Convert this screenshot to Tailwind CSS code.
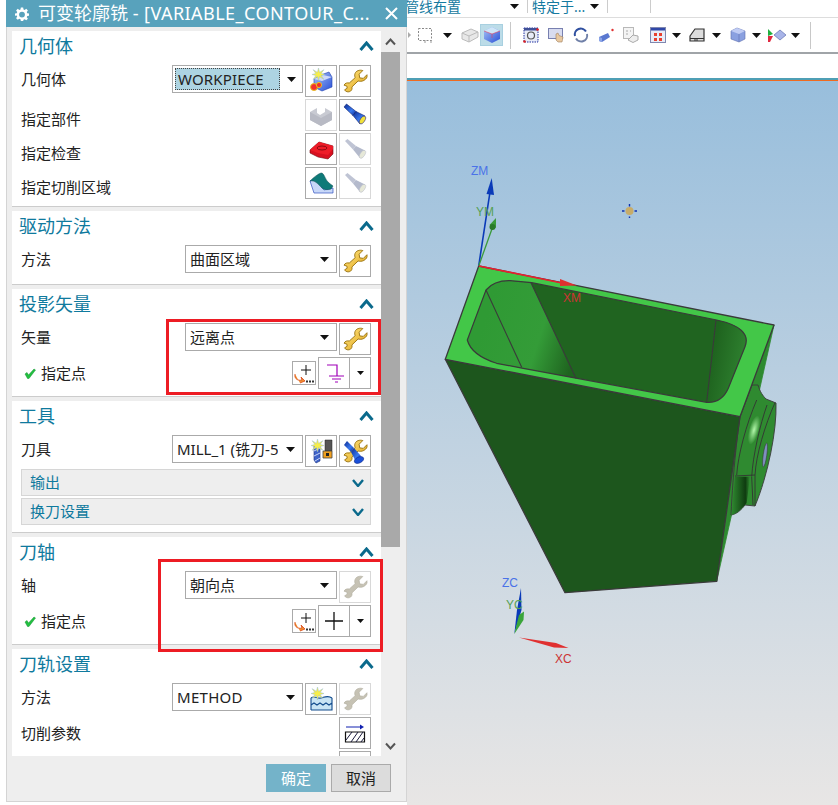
<!DOCTYPE html>
<html lang="zh-CN">
<head>
  <meta charset="UTF-8" />
  <title>可变轮廓铣</title>
  <script src="https://cdn.jsdelivr.net/npm/@tailwindcss/browser@4"></script>
</head>
<body class="w-[838px] h-[805px] overflow-hidden bg-white text-[15px] text-[#222] font-[family-name:'Noto_Sans','Noto_Sans_CJK_SC',sans-serif]">

  <!-- shared icons -->
  <svg class="absolute w-0 h-0" xmlns="http://www.w3.org/2000/svg">
    <defs>
      <linearGradient id="gold" x1="0" y1="0" x2="1" y2="1"><stop offset="0" stop-color="#ffe98a"/><stop offset="1" stop-color="#e0a010"/></linearGradient>
      <linearGradient id="blueBox" x1="0" y1="0" x2="1" y2="1"><stop offset="0" stop-color="#a9c4f5"/><stop offset="1" stop-color="#2a50d8"/></linearGradient>
      <linearGradient id="torch" x1="0" y1="0" x2="1" y2="1"><stop offset="0" stop-color="#0b2a90"/><stop offset="0.6" stop-color="#3a7af0"/><stop offset="1" stop-color="#0a2a90"/></linearGradient>
    </defs>
    <symbol id="wrench" viewBox="0 0 24 24">
      <path d="M23 5.5 19.5 9 16 8.5 15.5 5 19 1.5C16 .6 12.5 1.500 11.5 4.500 11 6 11.3 7.3 11.7 8.3L6 13.5C4 13 2 13.5 1 15.5L3.800 16.500 4 18.500 1.500 20C3 22.500 6.500 22.500 8 20.500 8.800 19.400 8.800 18.300 8.500 17.300L14.500 11.500C16 12 18 12 20 11 22.500 9.500 23.500 8 23 5.500Z" fill="url(#gold)" stroke="#9a7410" stroke-width=".9"/>
    </symbol>
    <symbol id="wrench-off" viewBox="0 0 24 24">
      <path d="M23 5.5 19.5 9 16 8.5 15.5 5 19 1.5C16 .6 12.5 1.500 11.5 4.500 11 6 11.3 7.3 11.7 8.3L6 13.5C4 13 2 13.5 1 15.5L3.800 16.500 4 18.500 1.500 20C3 22.500 6.500 22.500 8 20.500 8.800 19.400 8.800 18.300 8.500 17.300L14.500 11.500C16 12 18 12 20 11 22.500 9.500 23.500 8 23 5.500Z" fill="#c6c2b4" stroke="#b0ad9f" stroke-width=".6"/>
    </symbol>
    <symbol id="torch-on" viewBox="0 0 24 24">
      <path d="M1 4 3.500 1 13 8.500 10 12.500Z" fill="url(#torch)" stroke="#0a1f70" stroke-width=".6"/>
      <path d="M10 12.500 13 8.500 22 13 17 21Z" fill="url(#torch)" stroke="#0a1f70" stroke-width=".6"/>
      <ellipse cx="19.500" cy="17" rx="2.300" ry="4.500" transform="rotate(32 19.500 17)" fill="#f2e23a" stroke="#30308a" stroke-width=".6"/>
    </symbol>
    <symbol id="torch-off" viewBox="0 0 24 24">
      <path d="M2 4 4.500 2 13 9 10 12.500Z" fill="#bfc4d4"/>
      <path d="M10 12.500 13 9 22 13.500 17 21Z" fill="#b4bacc"/>
      <ellipse cx="19.500" cy="17.300" rx="2.300" ry="4.500" transform="rotate(32 19.500 17.300)" fill="#e6e8d8" stroke="#b8bccb" stroke-width=".5"/>
    </symbol>
    <symbol id="arrow" viewBox="0 0 9 5"><path d="M0 0H9L4.500 5Z" fill="#111"/></symbol>
    <symbol id="star" viewBox="0 0 12 12"><path d="M6 0 7 4 11 1.500 8.500 5 12 6 8.500 7 11 10.500 7 8 6 12 5 8 1 10.500 3.500 7 0 6 3.500 5 1 1.500 5 4Z" fill="#f7ee4a" stroke="#8fb8d8" stroke-width=".4"/></symbol>
  </svg>

  <div class="flex h-full pl-[6px]">

    <!-- operation dialog -->
    <div class="relative z-10 flex flex-col w-[401px] h-[802px] shrink-0 bg-[#eeeeee] border-x border-b border-[#d4d4d4]">
      <div class="flex items-center h-[27px] -mx-px bg-[#58a2bc] text-white text-[18px] shrink-0">
        <svg class="ml-[9px] w-[14px] h-[14px]" viewBox="0 0 24 24"><path fill="#fff" fill-rule="evenodd" d="M10 1h4l.6 3.200 2 .8L19.300 3.100l2.800 2.800L20.200 8.600l.8 2L24 11v4l-3 .4-.8 2 1.900 2.700-2.800 2.800-2.700-1.900-2 .8L14 24h-4l-.6-3.200-2-.8-2.700 1.900-2.800-2.800 1.900-2.700-.8-2L0 15v-4l3-.4.8-2L1.900 5.900 4.700 3.100 7.400 5l2-.8ZM12 8a5 5 0 1 0 0 10 5 5 0 0 0 0-10Z"/></svg>
        <span class="ml-[9px] whitespace-nowrap">可变轮廓铣 <span class="tracking-[.45px]">- [VARIABLE_CONTOUR_C...</span></span>
        <svg class="ml-auto mr-[9px] w-[13px] h-[13px]" viewBox="0 0 13 13"><path d="M1 1 12 12M12 1 1 12" stroke="#fff" stroke-width="2"/></svg>
      </div>

      <div class="flex mt-[4px] ml-[5px] h-[725px] shrink-0">
        <div class="w-[369px] h-full overflow-hidden">

          <section class="bg-white border-b border-[#cccccc] mb-[4px] h-[176px]">
            <div class="flex items-center justify-between h-[34px] pb-[4px] px-[7px] text-[18px] text-[#0f7a9e]">
              <span>几何体</span>
              <svg class="w-[15px] h-[10px]" viewBox="0 0 15 10"><path d="M1.500 9 7.500 2 13.500 9" fill="none" stroke="#0b6a8c" stroke-width="3"/></svg>
            </div>
            <div class="flex h-[34px] pl-[9px] pr-[10px]">
              <span class="flex-1 leading-[28px]">几何体</span>
              <div class="flex items-center w-[131px] h-[28px] border border-[#aaaaaa] pl-[2px]">
                <span class="w-[105px] h-[22px] leading-[20px] pl-[2px] tracking-[.15px] bg-[#add4e2] border border-dotted border-[#444]">WORKPIECE</span>
                <svg class="ml-[7px] w-[9px] h-[5px]"><use href="#arrow"/></svg>
              </div>
              <div class="flex items-center justify-center w-[32px] h-[32px] ml-[2px] border border-[#aaaaaa]">
                <svg class="w-[26px] h-[26px]" viewBox="0 0 26 26">
                  <path d="M10 8 21 4 24 9V19L14 23 6 19V11Z" fill="url(#blueBox)" stroke="#1f3fb0" stroke-width=".6"/>
                  <path d="M6 11 15 7 24 9 14 13Z" fill="#cdd9f8"/>
                  <circle cx="6" cy="19" r="3.500" fill="#f23030" stroke="#e8c020"/>
                  <circle cx="11" cy="17" r="2.600" fill="#f23030" stroke="#e8c020"/>
                  <use href="#star" x="4" y="0" width="13" height="13"/>
                </svg>
              </div>
              <div class="flex items-center justify-center w-[32px] h-[32px] ml-[2px] border border-[#aaaaaa]"><svg class="w-[25px] h-[25px]"><use href="#wrench"/></svg></div>
            </div>
            <div class="flex h-[34px] pl-[9px] pr-[10px]">
              <span class="flex-1 leading-[40px]">指定部件</span>
              <div class="flex items-center justify-center w-[32px] h-[32px] ml-[2px] border border-[#d8d8d8]">
                <svg class="w-[24px] h-[24px]" viewBox="0 0 24 24"><path d="M1 9 8 5V10L11 12 16 9 16 5 23 9V17L12 23 1 17Z" fill="#c8cad2"/><path d="M1 9 12 15 23 9V17L12 23 1 17Z" fill="#b8bac4"/></svg>
              </div>
              <div class="flex items-center justify-center w-[32px] h-[32px] ml-[2px] border border-[#aaaaaa]"><svg class="w-[24px] h-[24px]"><use href="#torch-on"/></svg></div>
            </div>
            <div class="flex h-[34px] pl-[9px] pr-[10px]">
              <span class="flex-1 leading-[40px]">指定检查</span>
              <div class="flex items-center justify-center w-[32px] h-[32px] ml-[2px] border border-[#aaaaaa]">
                <svg class="w-[25px] h-[25px]" viewBox="0 0 25 25"><path d="M1 13 10 5 24 9V17L19 22 9 20 1 16Z" fill="#d81020" stroke="#700a10" stroke-width=".6"/><path d="M1 13 9 16 19 18 24 12V9L10 5Z" fill="#ee1c28"/><ellipse cx="13" cy="11" rx="5" ry="2" fill="none" stroke="#8a0a12"/></svg>
              </div>
              <div class="flex items-center justify-center w-[32px] h-[32px] ml-[2px] border border-[#d8d8d8]"><svg class="w-[24px] h-[24px]"><use href="#torch-off"/></svg></div>
            </div>
            <div class="flex h-[34px] pl-[9px] pr-[10px]">
              <span class="flex-1 leading-[40px]">指定切削区域</span>
              <div class="flex items-center justify-center w-[32px] h-[32px] ml-[2px] border border-[#aaaaaa]">
                <svg class="w-[25px] h-[25px]" viewBox="0 0 25 25"><path d="M1 10 5 22 24 22 24 17 15 19 6 8Z" fill="#c8d8f8" stroke="#3050c0" stroke-width=".7"/><path d="M1 10C5 6 9 3 12 2 15 1.500 16 8 19 11 21 13 23 14 24 15L22 18C19 19 15 19 13 17 9 13 6 9 1 10Z" fill="#0f7a78" stroke="#0a4a50" stroke-width=".5"/></svg>
              </div>
              <div class="flex items-center justify-center w-[32px] h-[32px] ml-[2px] border border-[#d8d8d8]"><svg class="w-[24px] h-[24px]"><use href="#torch-off"/></svg></div>
            </div>
          </section>

          <section class="bg-white border-b border-[#cccccc] mb-[4px] h-[74px]">
            <div class="flex items-center justify-between h-[34px] pb-[4px] px-[7px] text-[18px] text-[#0f7a9e]">
              <span>驱动方法</span>
              <svg class="w-[15px] h-[10px]" viewBox="0 0 15 10"><path d="M1.500 9 7.500 2 13.500 9" fill="none" stroke="#0b6a8c" stroke-width="3"/></svg>
            </div>
            <div class="flex h-[34px] pl-[9px] pr-[10px]">
              <span class="flex-1 leading-[28px]">方法</span>
              <div class="flex items-center justify-between w-[152px] h-[28px] border border-[#aaaaaa] pl-[4px] pr-[7px]">
                <span>曲面区域</span>
                <svg class="w-[9px] h-[5px]"><use href="#arrow"/></svg>
              </div>
              <div class="flex items-center justify-center w-[32px] h-[32px] ml-[2px] border border-[#aaaaaa]"><svg class="w-[25px] h-[25px]"><use href="#wrench"/></svg></div>
            </div>
          </section>

          <section class="bg-white border-b border-[#cccccc] mb-[4px] h-[108px]">
            <div class="flex items-center justify-between h-[34px] pb-[4px] px-[7px] text-[18px] text-[#0f7a9e]">
              <span>投影矢量</span>
              <svg class="w-[15px] h-[10px]" viewBox="0 0 15 10"><path d="M1.500 9 7.500 2 13.500 9" fill="none" stroke="#0b6a8c" stroke-width="3"/></svg>
            </div>
            <div class="flex h-[34px] pl-[9px] pr-[10px]">
              <span class="flex-1 leading-[28px]">矢量</span>
              <div class="flex items-center justify-between w-[152px] h-[28px] border border-[#aaaaaa] pl-[4px] pr-[7px]">
                <span>远离点</span>
                <svg class="w-[9px] h-[5px]"><use href="#arrow"/></svg>
              </div>
              <div class="flex items-center justify-center w-[32px] h-[32px] ml-[2px] border border-[#aaaaaa]"><svg class="w-[25px] h-[25px]"><use href="#wrench"/></svg></div>
            </div>
            <div class="flex items-center h-[32px] pl-[12px] pr-[10px]">
              <svg class="w-[12px] h-[11px]" viewBox="0 0 12 11"><path d="M1 6 3 4.500 4.500 7 10 1 11.500 2 5 10.500H3.500Z" fill="#22c040" stroke="#129030" stroke-width=".5"/></svg>
              <span class="flex-1 ml-[5px]">指定点</span>
              <div class="flex items-center justify-center w-[24px] h-[24px] border border-[#aaaaaa]">
                <svg class="w-[22px] h-[22px]" viewBox="0 0 22 22"><path d="M13 3V13M8 8H18" stroke="#111"/><path d="M2 12C1 17 5 19 9 18L8 15 12 19 7 21" fill="#f09030" stroke="#d84818" stroke-width=".8"/><path d="M13 18.500h2v2h-2ZM16 18.500h2v2h-2ZM19 18.500h2v2h-2Z" fill="#333"/></svg>
              </div>
              <div class="flex w-[53px] h-[32px] ml-[2px] border border-[#aaaaaa]">
                <div class="flex items-center justify-center w-[31px] border-r border-[#aaaaaa]">
                  <svg class="w-[22px] h-[22px]" viewBox="0 0 22 22"><path d="M4 3H14V14M6 14H21M9 17H18M12 20H15" fill="none" stroke="#a000b8" stroke-width="1.200"/></svg>
                </div>
                <div class="flex flex-1 items-center justify-center"><svg class="w-[7px] h-[4px]"><use href="#arrow"/></svg></div>
              </div>
            </div>
          </section>

          <section class="bg-white border-b border-[#cccccc] mb-[4px] h-[132px]">
            <div class="flex items-center justify-between h-[34px] pb-[4px] px-[7px] text-[18px] text-[#0f7a9e]">
              <span>工具</span>
              <svg class="w-[15px] h-[10px]" viewBox="0 0 15 10"><path d="M1.500 9 7.500 2 13.500 9" fill="none" stroke="#0b6a8c" stroke-width="3"/></svg>
            </div>
            <div class="flex h-[34px] pl-[9px] pr-[10px]">
              <span class="flex-1 leading-[28px]">刀具</span>
              <div class="flex items-center w-[131px] h-[28px] border border-[#aaaaaa] pl-[4px]">
                <span class="w-[101px] overflow-hidden whitespace-nowrap">MILL_1 (铣刀-5</span>
                <svg class="ml-[8px] w-[9px] h-[5px]"><use href="#arrow"/></svg>
              </div>
              <div class="flex items-center justify-center w-[32px] h-[32px] ml-[2px] border border-[#aaaaaa]">
                <svg class="w-[26px] h-[26px]" viewBox="0 0 26 26"><path d="M6 8H12V23L8 25 6 22Z" fill="#3f63c8" stroke="#1a2f80" stroke-width=".6"/><path d="M6 13 12 10M6 18 12 15M7 23 12 20" stroke="#c8d4f8"/><path d="M17 2H24V13H17Z" fill="#555" stroke="#222" stroke-width=".5"/><path d="M15 13H24V20H15Z" fill="#f0a020" stroke="#444" stroke-width=".8"/><rect x="18" y="15" width="3" height="3" fill="#222"/><use href="#star" x="3" y="1" width="13" height="13"/></svg>
              </div>
              <div class="flex items-center justify-center w-[32px] h-[32px] ml-[2px] border border-[#aaaaaa]">
                <svg class="w-[25px] h-[25px]" viewBox="0 0 25 25"><use href="#wrench" width="25" height="25"/><path d="M1 6 4 2 11 9 8 13Z" fill="url(#torch)"/><path d="M8 13 11 9 18 17 13 23Z" fill="url(#torch)"/><ellipse cx="16" cy="21" rx="5" ry="3" transform="rotate(-25 16 21)" fill="#1a50d8" stroke="#0a2080" stroke-width=".5"/></svg>
              </div>
            </div>
            <div class="flex items-center justify-between h-[27px] ml-[9px] mr-[10px] bg-[#eeeeee] border border-[#d6d6d6] pl-[8px] pr-[6px] text-[#0f7a9e]">
              <span>输出</span>
              <svg class="w-[12px] h-[8px]" viewBox="0 0 12 8"><path d="M1 1 6 7 11 1" fill="none" stroke="#0b6a8c" stroke-width="2.400"/></svg>
            </div>
            <div class="flex items-center justify-between h-[27px] mt-[2px] ml-[9px] mr-[10px] bg-[#eeeeee] border border-[#d6d6d6] pl-[8px] pr-[6px] text-[#0f7a9e]">
              <span>换刀设置</span>
              <svg class="w-[12px] h-[8px]" viewBox="0 0 12 8"><path d="M1 1 6 7 11 1" fill="none" stroke="#0b6a8c" stroke-width="2.400"/></svg>
            </div>
          </section>

          <section class="bg-white border-b border-[#cccccc] mb-[4px] h-[108px]">
            <div class="flex items-center justify-between h-[34px] pb-[4px] px-[7px] text-[18px] text-[#0f7a9e]">
              <span>刀轴</span>
              <svg class="w-[15px] h-[10px]" viewBox="0 0 15 10"><path d="M1.500 9 7.500 2 13.500 9" fill="none" stroke="#0b6a8c" stroke-width="3"/></svg>
            </div>
            <div class="flex h-[34px] pl-[9px] pr-[10px]">
              <span class="flex-1 leading-[28px]">轴</span>
              <div class="flex items-center justify-between w-[152px] h-[28px] border border-[#aaaaaa] pl-[4px] pr-[7px]">
                <span>朝向点</span>
                <svg class="w-[9px] h-[5px]"><use href="#arrow"/></svg>
              </div>
              <div class="flex items-center justify-center w-[32px] h-[32px] ml-[2px] border border-[#d8d8d8]"><svg class="w-[25px] h-[25px]"><use href="#wrench-off"/></svg></div>
            </div>
            <div class="flex items-center h-[32px] pl-[12px] pr-[10px]">
              <svg class="w-[12px] h-[11px]" viewBox="0 0 12 11"><path d="M1 6 3 4.500 4.500 7 10 1 11.500 2 5 10.500H3.500Z" fill="#22c040" stroke="#129030" stroke-width=".5"/></svg>
              <span class="flex-1 ml-[5px]">指定点</span>
              <div class="flex items-center justify-center w-[24px] h-[24px] border border-[#aaaaaa]">
                <svg class="w-[22px] h-[22px]" viewBox="0 0 22 22"><path d="M13 3V13M8 8H18" stroke="#111"/><path d="M2 12C1 17 5 19 9 18L8 15 12 19 7 21" fill="#f09030" stroke="#d84818" stroke-width=".8"/><path d="M13 18.500h2v2h-2ZM16 18.500h2v2h-2ZM19 18.500h2v2h-2Z" fill="#333"/></svg>
              </div>
              <div class="flex w-[53px] h-[32px] ml-[2px] border border-[#aaaaaa]">
                <div class="flex items-center justify-center w-[31px] border-r border-[#aaaaaa]">
                  <svg class="w-[20px] h-[20px]" viewBox="0 0 20 20"><path d="M10 1V19M1 10H19" stroke="#111" stroke-width="1.300"/></svg>
                </div>
                <div class="flex flex-1 items-center justify-center"><svg class="w-[7px] h-[4px]"><use href="#arrow"/></svg></div>
              </div>
            </div>
          </section>

          <section class="bg-white border-b border-[#cccccc] h-[140px]">
            <div class="flex items-center justify-between h-[34px] pb-[4px] px-[7px] text-[18px] text-[#0f7a9e]">
              <span>刀轨设置</span>
              <svg class="w-[15px] h-[10px]" viewBox="0 0 15 10"><path d="M1.500 9 7.500 2 13.500 9" fill="none" stroke="#0b6a8c" stroke-width="3"/></svg>
            </div>
            <div class="flex h-[34px] pl-[9px] pr-[10px]">
              <span class="flex-1 leading-[28px]">方法</span>
              <div class="flex items-center w-[131px] h-[28px] border border-[#aaaaaa] pl-[4px]">
                <span class="w-[101px] overflow-hidden whitespace-nowrap tracking-[.3px]">METHOD</span>
                <svg class="ml-[8px] w-[9px] h-[5px]"><use href="#arrow"/></svg>
              </div>
              <div class="flex items-center justify-center w-[32px] h-[32px] ml-[2px] border border-[#aaaaaa]">
                <svg class="w-[26px] h-[26px]" viewBox="0 0 26 26"><path d="M3 12C7 9 9 13 13 12 17 11 20 9 24 12V24H3Z" fill="#c8e4f4"/><path d="M3 12C7 9 9 13 13 12 17 11 20 9 24 12M3 19 6 17 9 19 12 17 15 19 18 17 21 19 24 17M3 24H24V12M3 12V24" fill="none" stroke="#104a8c" stroke-width="1.100"/><use href="#star" x="3" y="1" width="13" height="13"/></svg>
              </div>
              <div class="flex items-center justify-center w-[32px] h-[32px] ml-[2px] border border-[#d8d8d8]"><svg class="w-[25px] h-[25px]"><use href="#wrench-off"/></svg></div>
            </div>
            <div class="flex h-[34px] pl-[9px] pr-[10px]">
              <span class="flex-1 leading-[32px]">切削参数</span>
              <div class="flex items-center justify-center w-[32px] h-[32px] ml-[2px] border border-[#aaaaaa]">
                <svg class="w-[24px] h-[24px]" viewBox="0 0 24 24"><path d="M3 6H19" stroke="#1020b0"/><path d="M17 3.500 21 6 17 8.500Z" fill="#1020b0"/><path d="M2.500 11H21.500V21H2.500Z" fill="#fff" stroke="#111" stroke-width="1.200"/><path d="M3 19 9 11M8 21 15 11M13 21 20 11M18 21 21 17" stroke="#1a1a3c"/></svg>
              </div>
            </div>
            <div class="flex h-[34px] pr-[10px] justify-end">
              <div class="w-[32px] h-[32px] border border-[#aaaaaa]"></div>
            </div>
          </section>
        </div>

        <!-- scrollbar -->
        <div class="flex flex-col w-[19px] h-full">
          <div class="flex items-center justify-center h-[21px]"><svg class="w-[11px] h-[8px]" viewBox="0 0 11 8"><path d="M1 6.500 5.500 1.500 10 6.500" fill="none" stroke="#555" stroke-width="2"/></svg></div>
          <div class="h-[495px] bg-[#a9a9a9]"></div>
          <div class="flex flex-1 items-end justify-center">
            <div class="flex items-center justify-center h-[21px]"><svg class="w-[11px] h-[8px]" viewBox="0 0 11 8"><path d="M1 1.500 5.500 6.500 10 1.500" fill="none" stroke="#555" stroke-width="2"/></svg></div>
          </div>
        </div>
      </div>

      <div class="flex justify-end gap-[5px] pt-[8px] pr-[15px]">
        <button class="w-[60px] h-[28px] bg-[#74b3c9] text-white">确定</button>
        <button class="w-[60px] h-[28px] bg-[#dcdcdc] border border-[#aaaaaa]">取消</button>
      </div>

      <!-- red call-outs drawn on the screenshot -->
      <div class="absolute left-[159px] top-[319px] w-[215px] h-[76px] border-[3px] border-[#ed1c24]"></div>
      <div class="absolute left-[151px] top-[559px] w-[225px] h-[93px] border-[3px] border-[#ed1c24]"></div>
    </div>

    <!-- main window -->
    <div class="flex flex-col flex-1 min-w-0">
      <div class="flex items-start h-[18px] shrink-0 border-b border-[#dddddd] text-[14px] leading-[13px] text-[#157a9f] overflow-hidden">
        <span class="w-[105px] -ml-[2px] whitespace-nowrap">管线布置</span>
        <svg class="mt-[4px] w-[9px] h-[5px]"><use href="#arrow"/></svg>
        <span class="ml-[8px] h-[13px] border-l border-[#cccccc]"></span>
        <span class="ml-[4px] w-[52px] whitespace-nowrap">特定于...</span>
        <svg class="mt-[4px] ml-[6px] w-[9px] h-[5px]"><use href="#arrow"/></svg>
        <span class="ml-[8px] h-[13px] border-l border-[#cccccc]"></span>
        <span class="ml-[42px] h-[13px] border-l border-[#cccccc]"></span>
      </div>

      <div class="flex items-center h-[36px] shrink-0 border-b-2 border-[#a0a4a8]">
        <svg class="ml-[1px] w-[3px] h-[6px]" viewBox="0 0 3 6"><path d="M0 0 3 3 0 6Z" fill="#aaa"/></svg>
        <svg class="ml-[6px] w-[16px] h-[16px]" viewBox="0 0 16 16"><rect x="1.500" y="1.500" width="13" height="12" fill="none" stroke="#888" stroke-dasharray="2 1.500"/><path d="M8 13V16M14 13V16" stroke="#999"/></svg>
        <svg class="ml-[10px] w-[9px] h-[5px]"><use href="#arrow"/></svg>
        <svg class="ml-[9px] w-[18px] h-[16px]" viewBox="0 0 18 16"><path d="M1 6 10 2 17 5V10L8 15 1 12Z" fill="#e8e8e8" stroke="#bbb"/><path d="M1 6 8 9 17 5M8 9V15" fill="none" stroke="#bbb"/></svg>
        <div class="flex items-center justify-center ml-[1px] w-[23px] h-[22px] bg-[#bcdce8] border border-[#a8d0e0]">
          <svg class="w-[18px] h-[18px]" viewBox="0 0 18 18"><path d="M1 5 9 1 17 5V13L9 17 1 13Z" fill="url(#blueBox)"/><path d="M1 5 9 8 17 5 9 1Z" fill="#cfe6f8"/><path d="M1 5 9 8 17 5M9 8V12" fill="none" stroke="#e04060" stroke-width=".6"/></svg>
        </div>
        <span class="ml-[7px] h-[27px] border-l border-[#c8c8c8]"></span>
        <svg class="ml-[12px] w-[16px] h-[16px]" viewBox="0 0 16 16"><rect x="1" y="1" width="14" height="14" fill="#e8ecf8" stroke="#2030a0" stroke-dasharray="1.500 1"/><rect x="1" y="1" width="14" height="2.500" fill="#405098"/><circle cx="8" cy="8.500" r="3.500" fill="none" stroke="#555" stroke-width="1.200"/><circle cx="14.500" cy="2.500" r="1.300" fill="#e02020"/><circle cx="1.500" cy="14.500" r="1.300" fill="#e02020"/></svg>
        <svg class="ml-[9px] w-[16px] h-[16px]" viewBox="0 0 16 16"><rect x=".5" y="1.500" width="14" height="10" fill="#d8dcf0" stroke="#7880b0"/><path d="M8 7V13L10 15H14L15 10 11 8.500 10 6Z" fill="#e8c8a0" stroke="#a08060" stroke-width=".6"/></svg>
        <svg class="ml-[9px] w-[16px] h-[16px]" viewBox="0 0 16 16"><path d="M2 9A6 6 0 0 1 13 4.500" fill="none" stroke="#3050a0" stroke-width="2"/><path d="M14 7A6 6 0 0 1 3 11.500" fill="none" stroke="#7080a8" stroke-width="2"/></svg>
        <svg class="ml-[9px] w-[17px] h-[16px]" viewBox="0 0 17 16"><path d="M1 10 10 6 12 10 4 15 1 14Z" fill="#5a78d0"/><path d="M1 10 4 11V15L1 14Z" fill="#8aa4e8"/><circle cx="14.500" cy="3" r="1.200" fill="#e03030"/></svg>
        <svg class="ml-[8px] w-[16px] h-[16px]" viewBox="0 0 16 16"><rect x=".5" y=".5" width="10" height="11" fill="#f4f4f4" stroke="#b8b8b8"/><path d="M5 13 10 8 15 9V13L10 15.500Z" fill="#eee" stroke="#aaa"/><path d="M3 4H5M7 4H8M3 7H5" stroke="#aaa"/></svg>
        <svg class="ml-[11px] w-[16px] h-[16px]" viewBox="0 0 16 16"><rect x=".5" y=".5" width="15" height="15" fill="#e8ecf8" stroke="#8088b0"/><rect x="1" y="1" width="14" height="2.500" fill="#3048a8"/><path d="M4 6h3v3H4ZM9 6h3v3H9ZM4 11h3v3H4ZM9 11h3v3H9Z" fill="#e84030"/></svg>
        <svg class="ml-[6px] w-[9px] h-[5px]"><use href="#arrow"/></svg>
        <svg class="ml-[8px] w-[16px] h-[16px]" viewBox="0 0 16 16"><path d="M1 9 6 2H15V14H1Z" fill="#ddd" stroke="#333" stroke-width="1.200"/><path d="M1 11.500H15" stroke="#333"/><path d="M5 13H9" stroke="#333"/></svg>
        <svg class="ml-[7px] w-[9px] h-[5px]"><use href="#arrow"/></svg>
        <svg class="ml-[9px] w-[16px] h-[16px]" viewBox="0 0 16 16"><path d="M1 4 7 1 15 4V12L9 15 1 12Z" fill="#8aa0e0" stroke="#6070b0" stroke-width=".6"/><path d="M1 4 9 7 15 4 7 1Z" fill="#c0ccf4"/><path d="M9 7V15" stroke="#6070b0" stroke-width=".6"/></svg>
        <svg class="ml-[6px] w-[9px] h-[5px]"><use href="#arrow"/></svg>
        <svg class="ml-[6px] w-[20px] h-[16px]" viewBox="0 0 20 16"><path d="M1 2 6 7 1 9Z" fill="#20b040"/><path d="M1 9H6L3 15 1 15Z" fill="#e02840"/><path d="M7 8 13 3 19 8 13 13Z" fill="#a8b4e8" stroke="#6070b0" stroke-width=".7"/></svg>
        <svg class="ml-[4px] w-[9px] h-[5px]"><use href="#arrow"/></svg>
        <span class="ml-[10px] h-[27px] border-l border-[#c8c8c8]"></span>
      </div>

      <div class="h-[24px] shrink-0 bg-white"></div>
      <div class="h-[2px] shrink-0 bg-[#4f9fb5]"></div>
      <div class="h-px shrink-0 bg-[#f06a20]"></div>

      <!-- graphics window, in page coordinates -->
      <div class="flex-1 min-h-0 bg-linear-to-b from-[#98bedc] to-[#e8e6e5]">
        <svg class="block w-full h-full" viewBox="407 81 431 724" font-family="'Liberation Sans',sans-serif" font-size="12">
          <defs>
            <linearGradient id="wallL" gradientUnits="userSpaceOnUse" x1="486" y1="315" x2="578" y2="345"><stop offset="0" stop-color="#2f9a34"/><stop offset=".6" stop-color="#349c38"/><stop offset="1" stop-color="#1f641f"/></linearGradient>
            <linearGradient id="wallR" gradientUnits="userSpaceOnUse" x1="712" y1="360" x2="745" y2="366"><stop offset="0" stop-color="#1f641f"/><stop offset="1" stop-color="#2f8230"/></linearGradient>
            <radialGradient id="hi" cx=".5" cy=".5" r=".5"><stop offset="0" stop-color="#b4f8ac"/><stop offset="1" stop-color="#a8f4a0" stop-opacity="0"/></radialGradient>
            <linearGradient id="dent" x1="0" y1="0" x2="1" y2="0"><stop offset="0" stop-color="#2f8a30"/><stop offset=".75" stop-color="#0f3c10"/><stop offset="1" stop-color="#2f8a30"/></linearGradient>
          </defs>

          <!-- side face, flange -->
          <path d="M774 325 740 416.700 716.700 581.300Z" fill="#2e8a30" stroke="#2e8a30" stroke-width=".8"/>
          <path d="M752 385 758 385C760 392 763 396 766 399L776 403C777 430 768 475 755 506L745 505C741 510 737 514 731 515 733 470 738 430 740 417Z" fill="#2f8a30" stroke="#3a3a3a" stroke-width=".9"/>
          <ellipse cx="754" cy="430" rx="5" ry="15" transform="rotate(15 754 430)" fill="url(#hi)"/>
          <path d="M731.500 515 735 476.700H750L746.700 503C741 509 737 514 731.500 515Z" fill="url(#dent)"/>
          <path d="M736.700 475C738 455 746 425 756.700 400M751.700 476.700C753 455 760 425 767 405M755 475C756 455 765 425 775 402.700M735 476 755 475M751.700 477 753 505M755 475 755 506" fill="none" stroke="#333" stroke-width=".9"/>
          <ellipse cx="765" cy="455" rx="1.800" ry="12" transform="rotate(8 765 455)" fill="#7f8fc0" stroke="#333" stroke-width=".5"/>

          <!-- front and top faces -->
          <path d="M445.300 359.300 740 416.700 716.700 581.300 565 592.700Z" fill="#1d561d" stroke="#3a3a3a" stroke-width="1.300" stroke-linejoin="round"/>
          <path d="M478.700 266 774 325 740 416.700 445.300 359.300Z" fill="#43c748" stroke="#3a3a3a" stroke-width="1.300" stroke-linejoin="round"/>

          <!-- pocket -->
          <path d="M510 280.700C500 280.500 491 284 486 290L467.300 340C470 350 480 358 496.700 363.300L523.300 368.300 706.700 402.300C716 403 724 398 728.300 388.300L745 346.700C750 334 740 325 716.700 320L531.700 282.700Z" fill="#206420"/>
          <path d="M510 280.700C500 280.500 491 284 486 290L467.300 340C470 350 480 358 496.700 363.300L523.300 368.300 576 378.300 531 282.700Z" fill="url(#wallL)"/>
          <path d="M716.700 320C740 325 750 334 745 346.700L728.300 388.300C724 398 716 403 706.700 402.300Z" fill="url(#wallR)"/>
          <path d="M510 280.700C500 280.500 491 284 486 290L467.300 340C470 350 480 358 496.700 363.300L523.300 368.300 706.700 402.300C716 403 724 398 728.300 388.300L745 346.700C750 334 740 325 716.700 320L531.700 282.700Z" fill="none" stroke="#3a3a3a" stroke-width="1.200"/>
          <path d="M486 290 521.700 367.300M531 282.700 576 378.300M716 320 706.700 401.700" fill="none" stroke="#3a3a3a" stroke-width="1.100"/>

          <!-- work coordinate system -->
          <path d="M478.700 266 490 192" stroke="#0a3ab8" stroke-width="1.600"/>
          <path d="M491.700 178 494 195 486.500 194Z" fill="#0a3ab8"/>
          <path d="M478.700 266 493 226" stroke="#3a9a3a" stroke-width="1.300"/>
          <path d="M496 218 496 228 489.500 225Z" fill="#3a9a3a"/>
          <circle cx="492.500" cy="227" r="3" fill="#2a7a2a"/>
          <path d="M479 266 562 283" stroke="#e82030" stroke-width="1.600"/>
          <path d="M560 279 577 285.500 560 286Z" fill="#e03030"/>
          <text x="471" y="175" fill="#4a72e8">ZM</text>
          <text x="476" y="216" fill="#55a055">YM</text>
          <text x="563" y="302" fill="#cc3434">XM</text>

          <!-- crosshair point -->
          <path d="M622 211H637M629.500 204V218" stroke="#1030b0" stroke-width="1.400" stroke-dasharray="2.500 10"/>
          <circle cx="629.500" cy="211" r="4" fill="#c8ac68"/>

          <!-- absolute coordinate system -->
          <path d="M514.300 634 517 610 521 588 521.500 610Z" fill="#0a3ab8"/>
          <path d="M514.300 634 519 615 524 611.500 523.500 620Z" fill="#3aa53a"/>
          <path d="M519 637.500 556 643 568.500 648 554 647.500Z" fill="#e03030"/>
          <text x="502" y="586.500" fill="#4a72e8">ZC</text>
          <text x="506" y="609" fill="#55a055">YC</text>
          <text x="555" y="662.500" fill="#cc3434">XC</text>
        </svg>
      </div>
    </div>
  </div>
</body>
</html>
